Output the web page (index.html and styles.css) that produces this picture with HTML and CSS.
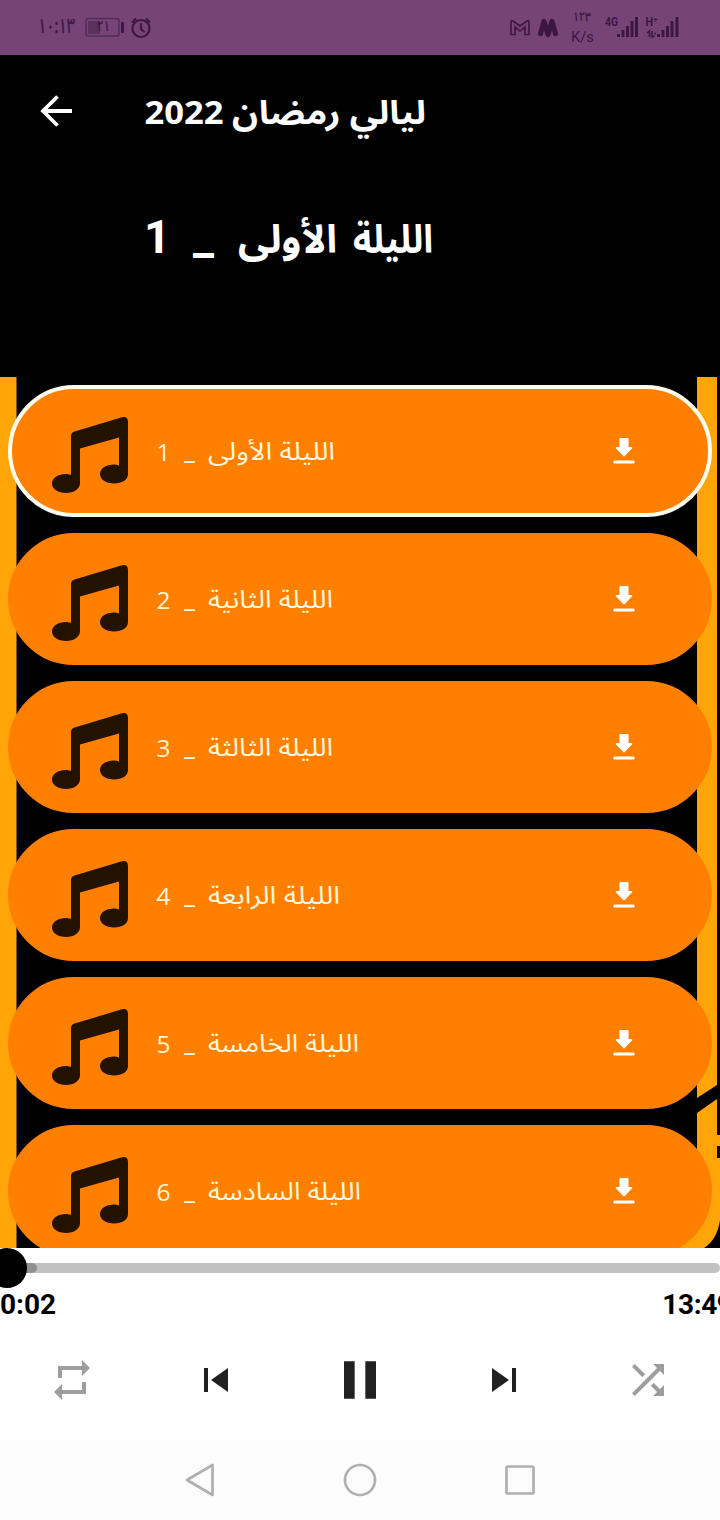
FILE: index.html
```html
<!DOCTYPE html>
<html lang="ar">
<head>
<meta charset="utf-8">
<title>ليالي رمضان 2022</title>
<link rel="stylesheet" href="styles.css">
</head>
<body>
<svg class="defs" aria-hidden="true">
  <symbol id="note" viewBox="0 0 76 76"><path fill-rule="evenodd" d="M19 19Q19 15.500 22.500 14.500L70 .3Q76-1 76 5V57C76 63 70 66.500 62 66.500S48 62.500 48 57 54 47.500 62 47.500Q65 47.500 67 48.500V20.500L28 31.500V66C28 72 22 76 14 76S0 72 0 66.500 6 57 14 57Q17 57 19 58Z" fill="#241200"/></symbol>
  <symbol id="download" viewBox="0 0 22 28"><path d="M6.500 2Q6.500 1 7.500 1h7q1 0 1 1v8h3q1.700.3.500 1.600l-7.200 7.400q-.8.800-1.600 0L3 11.600Q1.800 10.300 3.500 10h3ZM1.800 23.500h18.400a1.500 1.500 0 0 1 0 3H1.800a1.500 1.500 0 0 1 0-3Z" fill="#fff"/></symbol>
</svg>
<div class="screen">
  <header class="status">
    <svg width="720" height="55" viewBox="0 0 720 55">
      <g class="ink">
        <text class="ar" x="38" y="33" font-size="20" textLength="37" lengthAdjust="spacingAndGlyphs" stroke="#3d1743" stroke-width=".5">١٠:١٣</text>
        <rect x="86" y="18.500" width="33" height="17.500" rx="2.500" fill="none" stroke="#532c55" stroke-width="1.500"/>
        <rect x="88" y="21" width="12" height="13" fill="#59315c"/>
        <rect x="121" y="22" width="3" height="11" rx="1"/>
        <text class="ar" x="97" y="31" font-size="14" textLength="13" lengthAdjust="spacingAndGlyphs" stroke="#3d1743" stroke-width=".4">٢١</text>
        <g fill="none" stroke="#3d1743" stroke-width="2.200"><circle cx="141" cy="28.500" r="8.500"/><path d="M141 23v6l3.500 3M132 22.500l4-4M150 22.500l-4-4"/></g>
        <path d="M511 34.500V22q0-2 2-1l7 5 7-5q2-1 2 1v12.500h-4V27l-5 4-5-4v7.500Z" fill="none" stroke="#3d1743" stroke-width="1.600"/>
        <path d="M540.500 33.500l3.500-12 4 13 4-13 3.500 12" fill="none" stroke="#3d1743" stroke-width="5.200" stroke-linejoin="round" stroke-linecap="round"/>
        <text class="ar" x="573" y="21" font-size="12" textLength="18" lengthAdjust="spacingAndGlyphs" stroke="#3d1743" stroke-width=".4">١٢٣</text>
        <text x="571" y="42" font-size="15" textLength="23" lengthAdjust="spacingAndGlyphs">K/s</text>
        <text x="605" y="26" font-size="12" font-weight="700" textLength="13" lengthAdjust="spacingAndGlyphs">4G</text>
        <text x="645.500" y="26" font-size="12" font-weight="700" textLength="12" lengthAdjust="spacingAndGlyphs">H⁺</text>
        <path d="M617 34h3v3h-3zM621.500 30h3v7h-3zM626 26h3v11h-3zM630.500 21h3v16h-3zM635 17h3v20h-3zM657 34h3v3h-3zM661.500 30h3v7h-3zM666 26h3v11h-3zM670.500 21h3v16h-3zM675.500 17h3v20h-3z"/>
        <path d="M647 33l2.500-2v6M654.500 36l-2.500 1v-6M656 33.500h-2" fill="none" stroke="#3d1743" stroke-width="1.600"/>
      </g>
    </svg>
  </header>
  <section class="top">
    <svg width="720" height="322" viewBox="0 55 720 322" fill="#fff">
      <path d="M72 111H43M57.500 96.500 43 111l14.500 14.500" fill="none" stroke="#fff" stroke-width="3.800"/>
      <g class="bold">
        <text class="num" x="144.500" y="124" font-size="33" textLength="79" lengthAdjust="spacingAndGlyphs">2022</text>
        <text class="ar" x="232" y="123.500" font-size="33" textLength="194" lengthAdjust="spacingAndGlyphs">ليالي رمضان</text>
        <text class="rob" x="144" y="253" font-size="46">1</text>
        <text class="rob" x="193" y="253" font-size="46" textLength="21" lengthAdjust="spacingAndGlyphs">_</text>
        <text class="ar" x="238" y="252.500" font-size="39" textLength="99" lengthAdjust="spacingAndGlyphs">الأولى</text>
        <text class="ar" x="353" y="252.500" font-size="39" textLength="80" lengthAdjust="spacingAndGlyphs">الليلة</text>
      </g>
    </svg>
  </section>
  <main class="list">
    <svg class="backdrop" width="720" height="871" viewBox="0 377 720 871" fill="#ffa508">
      <path d="M0 377h16.500v871H0zM697 377h20v708l-20 13zM697 1113l20-14v36h3v11h-3v12h3v62q-3 20-16 28h-30l23-30z"/>
    </svg>
    <article class="card active"><svg class="note"><use href="#note"/></svg>
      <svg class="label" viewBox="156 0 240 60"><text class="num" x="156.500" y="39.500">1</text><text x="184" y="39.500" textLength="11" lengthAdjust="spacingAndGlyphs">_</text><text class="ar" x="208" y="39" textLength="127" lengthAdjust="spacingAndGlyphs">الليلة الأولى</text></svg><svg class="download"><use href="#download"/></svg></article>
    <article class="card"><svg class="note"><use href="#note"/></svg>
      <svg class="label" viewBox="156 0 240 60"><text class="num" x="156.500" y="39.500">2</text><text x="184" y="39.500" textLength="11" lengthAdjust="spacingAndGlyphs">_</text><text class="ar" x="208" y="39" textLength="125" lengthAdjust="spacingAndGlyphs">الليلة الثانية</text></svg><svg class="download"><use href="#download"/></svg></article>
    <article class="card"><svg class="note"><use href="#note"/></svg>
      <svg class="label" viewBox="156 0 240 60"><text class="num" x="156.500" y="39.500">3</text><text x="184" y="39.500" textLength="11" lengthAdjust="spacingAndGlyphs">_</text><text class="ar" x="208" y="39" textLength="125" lengthAdjust="spacingAndGlyphs">الليلة الثالثة</text></svg><svg class="download"><use href="#download"/></svg></article>
    <article class="card"><svg class="note"><use href="#note"/></svg>
      <svg class="label" viewBox="156 0 240 60"><text class="num" x="156.500" y="39.500">4</text><text x="184" y="39.500" textLength="11" lengthAdjust="spacingAndGlyphs">_</text><text class="ar" x="208" y="39" textLength="132" lengthAdjust="spacingAndGlyphs">الليلة الرابعة</text></svg><svg class="download"><use href="#download"/></svg></article>
    <article class="card"><svg class="note"><use href="#note"/></svg>
      <svg class="label" viewBox="156 0 240 60"><text class="num" x="156.500" y="39.500">5</text><text x="184" y="39.500" textLength="11" lengthAdjust="spacingAndGlyphs">_</text><text class="ar" x="208" y="39" textLength="151" lengthAdjust="spacingAndGlyphs">الليلة الخامسة</text></svg><svg class="download"><use href="#download"/></svg></article>
    <article class="card"><svg class="note"><use href="#note"/></svg>
      <svg class="label" viewBox="156 0 240 60"><text class="num" x="156.500" y="39.500">6</text><text x="184" y="39.500" textLength="11" lengthAdjust="spacingAndGlyphs">_</text><text class="ar" x="208" y="39" textLength="153" lengthAdjust="spacingAndGlyphs">الليلة السادسة</text></svg><svg class="download"><use href="#download"/></svg></article>
  </main>
  <footer class="player">
    <svg class="seek" width="720" height="40" viewBox="0 0 720 40">
      <rect x="-10" y="15" width="730" height="10" rx="5" fill="#c1c1c1"/>
      <rect x="-10" y="15" width="47" height="10" rx="5" fill="#909090"/>
      <circle cx="7" cy="20" r="20"/>
    </svg>
    <div class="times"><span>0:02</span><span class="total">13:49</span></div>
    <div class="controls">
      <svg viewBox="0 0 24 24" width="48" height="48" fill="#9e9e9e"><path d="M5 5h12V2l4 4-4 4V7H7v4H5zM19 19H7v3l-4-4 4-4v3h10v-4h2z"/></svg>
      <svg viewBox="0 0 24 24" width="48" height="48"><path d="M6 6h2v12H6zM9.500 12 18 18V6z"/></svg>
      <svg viewBox="0 0 24 24" width="64" height="64"><path d="M6 5h4v14H6zM14 5h4v14h-4z"/></svg>
      <svg viewBox="0 0 24 24" width="48" height="48"><path d="M6 18l8.500-6L6 6zM16 6h2v12h-2z"/></svg>
      <svg viewBox="0 0 24 24" width="48" height="48" fill="#9e9e9e"><path d="M10.590 9.170 5.410 4 4 5.410l5.170 5.170zM14.500 4l2.040 2.040L4 18.590 5.410 20 17.960 7.460 20 9.500V4zM14.830 13.410l-1.410 1.410 3.130 3.130L14.500 20H20v-5.500l-2.040 2.040z"/></svg>
    </div>
  </footer>
  <nav class="nav">
    <svg width="720" height="80" viewBox="0 1440 720 80" fill="none" stroke="#b0b0b0" stroke-width="2.700" stroke-linejoin="round"><path d="M187 1480l25.500-15v30z"/><circle cx="360" cy="1480" r="15"/><rect x="506.500" y="1466.500" width="27" height="27" rx="1.500"/></svg>
  </nav>
</div>
</body>
</html>
```
FILE: styles.css
```css
body { margin: 0; background: #000; }
svg { display: block; flex: none; }
.defs { position: absolute; width: 0; height: 0; }
.screen { width: 720px; height: 1520px; display: flex; flex-direction: column; overflow: hidden; font-family: Roboto, sans-serif; }
.status { height: 55px; background: #774477; }
.ink { fill: #3d1743; }
.ar { font-family: "Noto Sans Arabic", "DejaVu Sans", sans-serif; }
.num { font-family: "Open Sans", sans-serif; }
.rob { font-family: Roboto, sans-serif; }
.bold { font-weight: 700; }
.top { height: 322px; background: #000; }
.list { position: relative; height: 863px; padding: 8px 8px 0; display: flex; flex-direction: column; gap: 16px; overflow: hidden; }
.backdrop { position: absolute; left: 0; top: 0; }
.card { position: relative; flex: none; box-sizing: border-box; height: 132px; border-radius: 66px; border: 4px solid #ff8000; background: #ff8000; padding: 0 73px 0 40px; display: flex; align-items: center; }
.active { border-color: #fffbed; }
.note { width: 76px; height: 76px; margin-top: 8px; }
.label { width: 240px; height: 60px; margin-left: 28px; font-size: 24.5px; fill: #fff6d6; }
.download { width: 22px; height: 28px; margin-left: auto; }
.player { height: 192px; background: #fff; color: #000; }
.times { height: 32px; padding-bottom: 2px; display: flex; justify-content: space-between; align-items: center; font-size: 28px; font-weight: 700; }
.total { letter-spacing: -.4px; margin-right: -12.5px; }
.controls { display: grid; grid-template-columns: repeat(5, 144px); place-items: center; height: 116px; fill: #212121; }
.nav { height: 80px; background: #fcfcfc; }
```
